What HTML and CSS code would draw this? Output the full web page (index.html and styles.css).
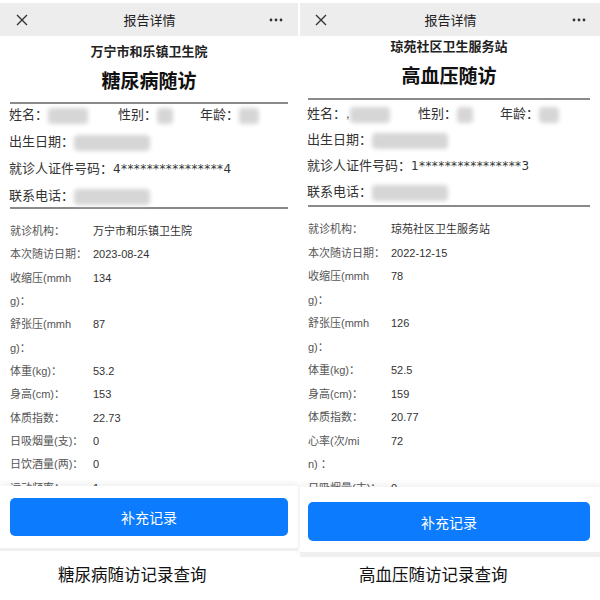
FILE: index.html
```html
<!DOCTYPE html>
<html>
  <head>
    <meta charset="UTF-8">
    <title>随访记录查询</title>
    <meta name="viewport" content="width=device-width, initial-scale=1.0">
    <link rel="stylesheet" href="styles.css">
  </head>
  <body>
    <div class="page">
      <section class="phone">
        <header class="topbar">
          <svg class="icon-close" width="12" height="12" viewBox="0 0 12 12"><path d="M1 1L11 11M11 1L1 11" stroke="#333" stroke-width="1.4" fill="none"/></svg>
          <span class="topbar-title">报告详情</span>
          <svg class="icon-more" width="14" height="4" viewBox="0 0 14 4"><circle cx="2" cy="2" r="1.4" fill="#333"/><circle cx="7" cy="2" r="1.4" fill="#333"/><circle cx="12" cy="2" r="1.4" fill="#333"/></svg>
        </header>
        <div class="content">
          <div class="org">万宁市和乐镇卫生院</div>
          <h1 class="report-title">糖尿病随访</h1>
          <div class="patient">
            <div class="patient-row patient-first">
              <span>姓名：<span class="blur blur-name"></span></span>
              <span>性别：<span class="blur blur-sex"></span></span>
              <span>年龄：<span class="blur blur-age"></span></span>
            </div>
            <div class="patient-row">出生日期：<span class="blur blur-long"></span></div>
            <div class="patient-row">就诊人证件号码：<span class="id-number">4****************4</span></div>
            <div class="patient-row">联系电话：<span class="blur blur-long"></span></div>
          </div>
          <div class="details">
            <div class="detail-row"><span class="detail-label">就诊机构：</span><span class="detail-value">万宁市和乐镇卫生院</span></div>
            <div class="detail-row"><span class="detail-label">本次随访日期：</span><span class="detail-value">2023-08-24</span></div>
            <div class="detail-row"><span class="detail-label">收缩压(mmh<br>g)：</span><span class="detail-value">134</span></div>
            <div class="detail-row"><span class="detail-label">舒张压(mmh<br>g)：</span><span class="detail-value">87</span></div>
            <div class="detail-row"><span class="detail-label">体重(kg)：</span><span class="detail-value">53.2</span></div>
            <div class="detail-row"><span class="detail-label">身高(cm)：</span><span class="detail-value">153</span></div>
            <div class="detail-row"><span class="detail-label">体质指数：</span><span class="detail-value">22.73</span></div>
            <div class="detail-row"><span class="detail-label">日吸烟量(支)：</span><span class="detail-value">0</span></div>
            <div class="detail-row"><span class="detail-label">日饮酒量(两)：</span><span class="detail-value">0</span></div>
            <div class="detail-row"><span class="detail-label">运动频率：</span><span class="detail-value">1</span></div>
          </div>
        </div>
        <div class="actions">
          <button type="button" class="action-button">补充记录</button>
        </div>
        <p class="caption">糖尿病随访记录查询</p>
      </section>

      <section class="phone phone-b">
        <header class="topbar">
          <svg class="icon-close" width="12" height="12" viewBox="0 0 12 12"><path d="M1 1L11 11M11 1L1 11" stroke="#333" stroke-width="1.4" fill="none"/></svg>
          <span class="topbar-title">报告详情</span>
          <svg class="icon-more" width="14" height="4" viewBox="0 0 14 4"><circle cx="2" cy="2" r="1.4" fill="#333"/><circle cx="7" cy="2" r="1.4" fill="#333"/><circle cx="12" cy="2" r="1.4" fill="#333"/></svg>
        </header>
        <div class="content">
          <div class="org">琼苑社区卫生服务站</div>
          <h1 class="report-title">高血压随访</h1>
          <div class="patient">
            <div class="patient-row patient-first">
              <span>姓名：,<span class="blur blur-name"></span></span>
              <span>性别：<span class="blur blur-sex"></span></span>
              <span>年龄：<span class="blur blur-age"></span></span>
            </div>
            <div class="patient-row">出生日期：<span class="blur blur-long"></span></div>
            <div class="patient-row">就诊人证件号码：<span class="id-number">1****************3</span></div>
            <div class="patient-row">联系电话：<span class="blur blur-long"></span></div>
          </div>
          <div class="details">
            <div class="detail-row"><span class="detail-label">就诊机构：</span><span class="detail-value">琼苑社区卫生服务站</span></div>
            <div class="detail-row"><span class="detail-label">本次随访日期：</span><span class="detail-value">2022-12-15</span></div>
            <div class="detail-row"><span class="detail-label">收缩压(mmh<br>g)：</span><span class="detail-value">78</span></div>
            <div class="detail-row"><span class="detail-label">舒张压(mmh<br>g)：</span><span class="detail-value">126</span></div>
            <div class="detail-row"><span class="detail-label">体重(kg)：</span><span class="detail-value">52.5</span></div>
            <div class="detail-row"><span class="detail-label">身高(cm)：</span><span class="detail-value">159</span></div>
            <div class="detail-row"><span class="detail-label">体质指数：</span><span class="detail-value">20.77</span></div>
            <div class="detail-row"><span class="detail-label">心率(次/mi<br>n) ：</span><span class="detail-value">72</span></div>
            <div class="detail-row"><span class="detail-label">日吸烟量(支)：</span><span class="detail-value">0</span></div>
          </div>
        </div>
        <div class="actions">
          <button type="button" class="action-button">补充记录</button>
        </div>
        <p class="caption">高血压随访记录查询</p>
      </section>
    </div>
  </body>
</html>
```

FILE: styles.css
```css
* {
    box-sizing: border-box;
}

body {
    margin: 0;
    font-family: "Liberation Sans", "Noto Sans CJK SC", sans-serif;
    background-color: #fff;
    color: #333;
}

.page {
    display: flex;
    gap: 2px;
}

.phone {
    width: 298px;
    display: flex;
    flex-direction: column;
}

.phone-b {
    width: 300px;
}

/* top navigation bar */
.topbar {
    margin-top: 3px;
    height: 33px;
    background-color: #ededed;
    display: grid;
    grid-template-columns: 1fr auto 1fr;
    align-items: center;
    padding: 0 15px 0 16px;
}

.topbar-title {
    font-size: 13px;
    color: #222;
}

.icon-more {
    justify-self: end;
}

.content {
    height: 450px;
    overflow: hidden;
    padding: 0 10px;
}

.org {
    margin-top: 6px;
    line-height: 20px;
    font-size: 13px;
    font-weight: bold;
    text-align: center;
    color: #222;
}

.report-title {
    margin: 6px 0;
    font-size: 19px;
    line-height: 28px;
    text-align: center;
    font-weight: bold;
    color: #111;
}

.patient {
    border-top: 2px solid #8a8a8a;
    border-bottom: 2px solid #8a8a8a;
    display: flex;
    flex-direction: column;
    gap: 5px;
    font-size: 13px;
    line-height: 22px;
    color: #333;
}

.patient-row {
    margin-left: -1px;
    white-space: nowrap;
}

.patient-first {
    display: grid;
    grid-template-columns: 109px 82px 1fr;
}

.id-number {
    font-family: "DejaVu Sans", sans-serif;
    font-size: 12px;
    letter-spacing: 0.4px;
}

.blur {
    display: inline-block;
    height: 16px;
    vertical-align: middle;
    background-color: #d6d6d6;
    border-radius: 4px;
    filter: blur(2px);
}

.blur-name {
    width: 40px;
}

.blur-sex {
    width: 16px;
}

.blur-age {
    width: 20px;
}

.blur-long {
    width: 76px;
}

.details {
    padding-top: 11px;
    font-size: 11px;
    line-height: 23.33px;
}

.detail-row {
    display: grid;
    grid-template-columns: 83px 1fr;
}

.detail-label {
    color: #555;
}

.detail-value {
    color: #333;
}

/* bottom action bar */
.actions {
    position: relative;
    padding: 12px 10px;
    background-color: #fff;
    border-bottom: 3px solid #f0f0f0;
    box-shadow: 0 -3px 6px rgba(0, 0, 0, 0.06);
}

.action-button {
    display: block;
    width: 100%;
    height: 38px;
    border: none;
    border-radius: 5px;
    background-color: #0c7bfe;
    color: #fff;
    font-family: inherit;
    font-size: 14px;
}

.caption {
    margin: 0;
    padding-left: 58px;
    line-height: 49px;
    font-size: 16.5px;
    color: #111;
}

/* the second screenshot sits a few pixels higher at the top */
.phone-b .topbar {
    padding: 0 14px 0 15px;
}

.phone-b .content {
    height: 451px;
    padding: 0 10px 0 8px;
}

.phone-b .org {
    margin-top: 1px;
}

.phone-b .report-title {
    margin: 6px 0 7px;
}

.phone-b .patient {
    gap: 4px;
    padding: 3px 0 2px;
}

.phone-b .patient-first {
    grid-template-columns: 111px 82px 1fr;
}

.phone-b .details {
    line-height: 23.5px;
}

.phone-b .actions {
    padding: 15px 10px 11px 8px;
    border-bottom-width: 5px;
}

.phone-b .action-button {
    height: 39px;
}

.phone-b .caption {
    padding-left: 59px;
    line-height: 37px;
}
```
